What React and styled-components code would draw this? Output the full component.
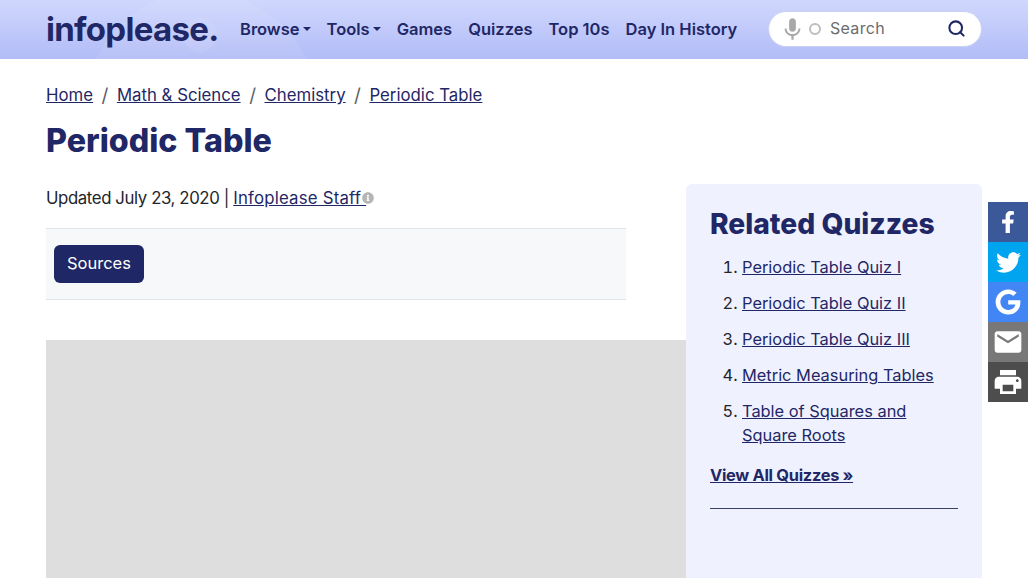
import React from 'react'
import styled, { createGlobalStyle } from 'styled-components'
import { FaFacebookF, FaTwitter, FaGoogle, FaInfoCircle } from 'react-icons/fa'
import { MdEmail, MdMic, MdPrint } from 'react-icons/md'
import { FiSearch } from 'react-icons/fi'

const NAVY = '#1f2766'
const BODY_FONT = '"Inter", "Noto Sans", "Liberation Sans", sans-serif'

const GlobalStyle = createGlobalStyle`
  html, body {
    margin: 0;
    height: 100%;
    overflow: hidden;
    background: #fff;
    font-family: ${BODY_FONT};
    color: #22252c;
  }
  #root { height: 100%; }
  a { color: ${NAVY}; }
`

const Page = styled.div`
  height: 578px;
  overflow: hidden;
`

const Header = styled.header`
  position: relative;
  height: 59px;
  box-sizing: border-box;
  padding: 0 46px 2px;
  display: flex;
  align-items: center;
  overflow: hidden;
  background: linear-gradient(180deg, #d0d7fd 0%, #b2bcf7 100%);
`

const Blob = styled.span`
  position: absolute;
  top: ${p => p.$top}px;
  left: ${p => p.$left}px;
  width: ${p => p.$size}px;
  height: ${p => p.$size}px;
  border-radius: 50%;
  background: rgba(255, 255, 255, 0.08);
`

const Logo = styled.a`
  position: relative;
  width: 194px;
  flex: none;
  font-size: 33px;
  font-weight: 700;
  line-height: 40px;
  letter-spacing: -0.7px;
  color: ${NAVY};
  text-decoration: none;
`

const Nav = styled.nav`
  position: relative;
  display: flex;
  gap: 16px;
  width: 528px;
  flex: none;
`

const NavItem = styled.a`
  display: flex;
  align-items: center;
  font-size: 16.5px;
  font-weight: 600;
  color: ${NAVY};
  text-decoration: none;
  white-space: nowrap;
  &::after {
    content: ${p => (p.$caret ? '""' : 'none')};
    margin-left: 3px;
    border-top: 4px solid currentColor;
    border-left: 4px solid transparent;
    border-right: 4px solid transparent;
  }
`

const SearchBox = styled.div`
  position: relative;
  width: 214px;
  height: 36px;
  margin-top: 1px;
  box-sizing: border-box;
  padding: 0 15px 0 13px;
  display: flex;
  align-items: center;
  background: #fff;
  border: 1px solid #c9d0f5;
  border-radius: 18px;
`

const MicIcon = styled(MdMic)`
  font-size: 27px;
  margin-left: -3px;
  color: #a8a8a8;
  flex: none;
`

const Ring = styled.span`
  width: 12px;
  height: 12px;
  box-sizing: border-box;
  margin-left: 3px;
  border: 2px solid #bdbdbd;
  border-radius: 50%;
  flex: none;
`

const SearchText = styled.span`
  margin: 0 0 2px 9px;
  flex: 1;
  font-size: 16px;
  letter-spacing: 0.3px;
  color: #6c6c6c;
`

const SearchIcon = styled(FiSearch)`
  margin-bottom: 2px;
  font-size: 19px;
  stroke-width: 2.6;
  color: ${NAVY};
`

const Content = styled.div`
  padding: 0 46px;
`

const Crumbs = styled.div`
  display: flex;
  align-items: center;
  height: 24px;
  margin-top: 24px;
  font-size: 16.8px;
`

const Crumb = styled.a`
  color: ${NAVY};
  text-decoration: underline;
`

const StaffLink = styled(Crumb)`
  letter-spacing: 0.2px;
`

const Slash = styled.span`
  padding: 0 8.5px;
  font-size: 19px;
  color: #5b5f68;
`

const Title = styled.h1`
  margin: 14px 0 0;
  height: 40px;
  font-size: 32.2px;
  line-height: 40px;
  font-weight: 800;
  color: ${NAVY};
`

const Columns = styled.div`
  display: flex;
  margin-top: 23px;
  align-items: flex-start;
`

const Main = styled.main`
  width: 640px;
  flex: none;
`

const Updated = styled.div`
  display: flex;
  align-items: center;
  height: 28px;
  font-size: 16.8px;
  white-space: pre;
`

const Stamp = styled.span`
  letter-spacing: -0.4px;
`

const InfoIcon = styled(FaInfoCircle)`
  font-size: 12px;
  margin-left: -4px;
  color: #b5b5b5;
`

const Toolbar = styled.div`
  width: 580px;
  height: 72px;
  margin-top: 16px;
  box-sizing: border-box;
  padding: 0 8px;
  display: flex;
  align-items: center;
  background: #f7f8fa;
  border-top: 1px solid #e3e4e8;
  border-bottom: 1px solid #e3e4e8;
`

const SourcesButton = styled.button`
  height: 38px;
  padding: 0 13px 2px;
  border: 0;
  border-radius: 6px;
  font-family: inherit;
  font-size: 16.5px;
  color: #fff;
  background: ${NAVY};
`

const AdSlot = styled.div`
  height: 300px;
  margin-top: 40px;
  background: #dedede;
`

const Sidebar = styled.aside`
  width: 296px;
  height: 420px;
  flex: none;
  box-sizing: border-box;
  padding: 20px 24px;
  border-radius: 6px 6px 0 0;
  background: #eff2fe;
`

const SideTitle = styled.h2`
  margin: 0;
  font-size: 28.2px;
  line-height: 40px;
  font-weight: 800;
  white-space: nowrap;
  color: ${NAVY};
`

const QuizList = styled.ol`
  margin: 11px 0 0;
  padding: 0 0 0 32px;
  font-size: 16.4px;
  line-height: 24px;
`

const QuizItem = styled.li`
  margin-bottom: 12px;
`

const QuizLink = styled.a`
  text-decoration: underline;
`

const ViewAll = styled.a`
  display: block;
  padding-bottom: 21px;
  margin-top: 16px;
  font-size: 16.4px;
  font-weight: 700;
  line-height: 24px;
  letter-spacing: -0.3px;
  border-bottom: 1px solid #3a3f66;
`

const ShareBar = styled.div`
  position: fixed;
  top: 202px;
  right: 0;
  display: flex;
  flex-direction: column;
`

const ShareButton = styled.a`
  width: 40px;
  height: 40px;
  display: flex;
  align-items: center;
  justify-content: center;
  color: #fff;
  font-size: ${p => p.$size || 22}px;
  background: ${p => p.$bg};
`

const quizzes = [
  'Periodic Table Quiz I',
  'Periodic Table Quiz II',
  'Periodic Table Quiz III',
  'Metric Measuring Tables',
  'Table of Squares and Square Roots',
]

export default function App() {
  return (
    <Page>
      <GlobalStyle />
      <Header>
        <Blob $top={-8} $left={85} $size={232} />
        <Blob $top={18} $left={183} $size={34} />
        <Logo>infoplease.</Logo>
        <Nav>
          <NavItem $caret>Browse</NavItem>
          <NavItem $caret>Tools</NavItem>
          <NavItem>Games</NavItem>
          <NavItem>Quizzes</NavItem>
          <NavItem>Top 10s</NavItem>
          <NavItem>Day In History</NavItem>
        </Nav>
        <SearchBox>
          <MicIcon />
          <Ring />
          <SearchText>Search</SearchText>
          <SearchIcon />
        </SearchBox>
      </Header>
      <Content>
        <Crumbs>
          <Crumb>Home</Crumb>
          <Slash>/</Slash>
          <Crumb>Math &amp; Science</Crumb>
          <Slash>/</Slash>
          <Crumb>Chemistry</Crumb>
          <Slash>/</Slash>
          <Crumb>Periodic Table</Crumb>
        </Crumbs>
        <Title>Periodic Table</Title>
        <Columns>
          <Main>
            <Updated>
              <Stamp>Updated July 23, 2020 | </Stamp>
              <StaffLink>Infoplease Staff </StaffLink>
              <InfoIcon />
            </Updated>
            <Toolbar>
              <SourcesButton>Sources</SourcesButton>
            </Toolbar>
            <AdSlot />
          </Main>
          <Sidebar>
            <SideTitle>Related Quizzes</SideTitle>
            <QuizList>
              {quizzes.map(q => (
                <QuizItem key={q}>
                  <QuizLink href="#">{q}</QuizLink>
                </QuizItem>
              ))}
            </QuizList>
            <ViewAll href="#">View All Quizzes »</ViewAll>
          </Sidebar>
        </Columns>
      </Content>
      <ShareBar>
        <ShareButton $bg="#3b5998" $size={22}><FaFacebookF /></ShareButton>
        <ShareButton $bg="#00a4ef" $size={25}><FaTwitter /></ShareButton>
        <ShareButton $bg="#4285f4" $size={26}><FaGoogle /></ShareButton>
        <ShareButton $bg="#787878" $size={32}><MdEmail /></ShareButton>
        <ShareButton $bg="#4d4d4d" $size={32}><MdPrint /></ShareButton>
      </ShareBar>
    </Page>
  )
}
